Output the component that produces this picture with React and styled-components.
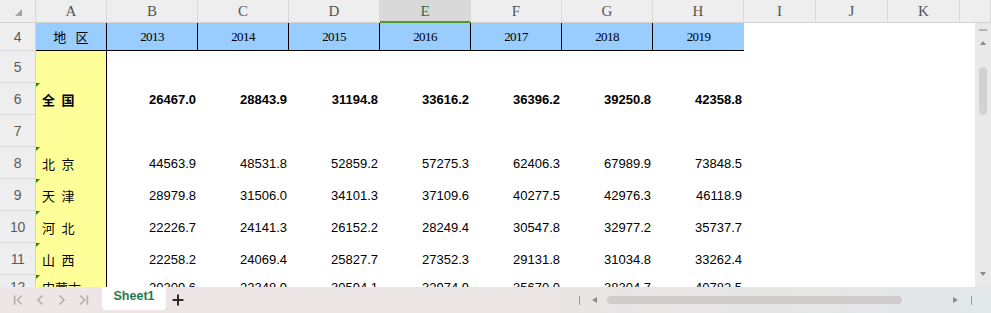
import React from 'react'
import styled, { createGlobalStyle } from 'styled-components'
import { ChevronFirst, ChevronLeft, ChevronRight, ChevronLast, Plus } from 'lucide-react'

const GlobalStyle = createGlobalStyle`
  html, body {
    margin: 0;
    padding: 0;
    background: #fff;
  }
  body {
    font-family: "Liberation Sans", Arial, sans-serif;
    overflow: hidden;
  }
`

const COLS = '36px 71px repeat(7, 91px) 72px 72px 72px 1fr'

const letters = ['A', 'B', 'C', 'D', 'E', 'F', 'G', 'H', 'I', 'J', 'K']
const years = ['2013', '2014', '2015', '2016', '2017', '2018', '2019']

const rows = [
    { n: 5 },
    { n: 6, name: '全 国', bold: true, flag: true, values: ['26467.0', '28843.9', '31194.8', '33616.2', '36396.2', '39250.8', '42358.8'] },
    { n: 7 },
    { n: 8, name: '北 京', flag: true, values: ['44563.9', '48531.8', '52859.2', '57275.3', '62406.3', '67989.9', '73848.5'] },
    { n: 9, name: '天 津', flag: true, values: ['28979.8', '31506.0', '34101.3', '37109.6', '40277.5', '42976.3', '46118.9'] },
    { n: 10, name: '河 北', flag: true, values: ['22226.7', '24141.3', '26152.2', '28249.4', '30547.8', '32977.2', '35737.7'] },
    { n: 11, name: '山 西', flag: true, values: ['22258.2', '24069.4', '25827.7', '27352.3', '29131.8', '31034.8', '33262.4'] },
    { n: 12, name: '内蒙古', flag: true, values: ['20209.6', '22348.9', '30594.1', '32974.9', '35670.0', '38304.7', '40782.5'] },
]

const App = () => {
    return (
        <Window>
            <GlobalStyle />
            <ColHeader>
                <Corner><CornerMark /></Corner>
                {letters.map(l => (
                    <ColHead key={l} $active={l === 'E'}>{l}</ColHead>
                ))}
                <ColHead />
            </ColHeader>
            <Body>
                <Grid>
                    <RowHead>4</RowHead>
                    <TitleCell $spaced>地 区</TitleCell>
                    {years.map((y, i) => (
                        <TitleCell key={y} $last={i === years.length - 1}>{y}</TitleCell>
                    ))}
                    <Blank /><Blank /><Blank /><Blank />

                    {rows.map(r => (
                        <React.Fragment key={r.n}>
                            <RowHead>{r.n}</RowHead>
                            <NameCell $bold={r.bold} $flag={r.flag}>{r.name}</NameCell>
                            {(r.values || Array(7).fill('')).map((v, i) => (
                                <NumCell key={i} $bold={r.bold}>{v}</NumCell>
                            ))}
                            <Blank /><Blank /><Blank /><Blank />
                        </React.Fragment>
                    ))}
                </Grid>
                <VScroll>
                    <Dash />
                    <ArrowUp />
                    <VThumb />
                    <Spacer />
                    <ArrowDown />
                </VScroll>
            </Body>
            <BottomBar>
                <NavGroup>
                    <ChevronFirst size={16} strokeWidth={2.6} />
                    <ChevronLeft size={16} strokeWidth={2.6} />
                    <ChevronRight size={16} strokeWidth={2.6} />
                    <ChevronLast size={16} strokeWidth={2.6} />
                </NavGroup>
                <SheetTab>Sheet1</SheetTab>
                <AddSheet><Plus size={16} strokeWidth={3} /></AddSheet>
                <HScroll>
                    <Tick />
                    <ArrowLeft />
                    <HThumb />
                    <Spacer />
                    <ArrowRight />
                    <Tick $end />
                </HScroll>
            </BottomBar>
        </Window>
    )
}

const Window = styled.div`
    width: 991px;
    height: 313px;
    display: flex;
    flex-direction: column;
    overflow: hidden;
    background: #fff;
`
const ColHeader = styled.div`
    display: grid;
    grid-template-columns: ${COLS};
    height: 23px;
    flex-shrink: 0;
`
const Corner = styled.div`
    background: #eeeeee;
    border-right: 1px solid #d6d6d6;
    border-bottom: 1px solid #d2d2d2;
    display: flex;
    align-items: center;
    justify-content: center;
    padding: 3px 0 0 1px;
    box-sizing: border-box;
`
const CornerMark = styled.div`
    width: 0;
    height: 0;
    border-bottom: 7px solid #a5a5a5;
    border-left: 7px solid transparent;
`
const ColHead = styled.div`
    box-sizing: border-box;
    background: ${p => (p.$active ? '#d9d9d9' : '#eeeeee')};
    border-right: 1px solid #d9d9d9;
    border-bottom: ${p => (p.$active ? '2px solid #4c9a2a' : '1px solid #d2d2d2')};
    color: ${p => (p.$active ? '#217346' : '#555')};
    font-family: "Liberation Serif", "DejaVu Serif", serif;
    font-size: 15px;
    display: flex;
    align-items: center;
    justify-content: center;
    padding-top: ${p => (p.$active ? '1px' : '0')};
`
const Body = styled.div`
    display: flex;
    height: 264px;
    flex-shrink: 0;
    overflow: hidden;
`
const Grid = styled.div`
    flex: 1;
    display: grid;
    grid-template-columns: ${COLS};
    grid-template-rows: 28px repeat(7, 32px) 24px;
    align-content: start;
    overflow: hidden;
`
const RowHead = styled.div`
    box-sizing: border-box;
    background: #eeeeee;
    border-right: 1px solid #d2d2d2;
    border-bottom: 1px solid #dadada;
    color: #5a5a5a;
    font-family: "Liberation Sans", Arial, sans-serif;
    font-size: 14px;
    letter-spacing: -0.4px;
    display: flex;
    align-items: center;
    justify-content: center;
`
const TitleCell = styled.div`
    box-sizing: border-box;
    background: #99ccff;
    border-right: ${p => (p.$last ? 'none' : '1px solid #000')};
    border-bottom: 1px solid #000;
    color: #000;
    font-family: "Liberation Serif", "Noto Sans CJK SC", serif;
    font-size: 13px;
    letter-spacing: ${p => (p.$spaced ? '0' : '-0.6px')};
    word-spacing: ${p => (p.$spaced ? '6px' : '0')};
    white-space: pre;
    display: flex;
    align-items: center;
    justify-content: center;
`
const NameCell = styled.div`
    position: relative;
    box-sizing: border-box;
    background: #ffff99;
    border-right: 1px solid #000;
    color: #000;
    font-family: "Liberation Sans", "Noto Sans CJK SC", sans-serif;
    font-size: 13px;
    font-weight: ${p => (p.$bold ? 700 : 400)};
    word-spacing: 3px;
    display: flex;
    align-items: center;
    padding-left: 6px;
    white-space: pre;
    &::before {
        content: '';
        display: ${p => (p.$flag ? 'block' : 'none')};
        position: absolute;
        top: 0;
        left: 0;
        border-top: 4px solid #1f7f1f;
        border-right: 4px solid transparent;
    }
`
const NumCell = styled.div`
    box-sizing: border-box;
    color: #000;
    font-family: "Liberation Sans", Arial, sans-serif;
    font-size: 13px;
    font-weight: ${p => (p.$bold ? 700 : 400)};
    display: flex;
    align-items: center;
    justify-content: flex-end;
    padding-right: 2px;
`
const Blank = styled.div`
    background: #fff;
`
const VScroll = styled.div`
    width: 16px;
    flex-shrink: 0;
    background: #e9e9e9;
    display: flex;
    flex-direction: column;
    align-items: center;
    padding: 6px 0 11px;
    box-sizing: border-box;
`
const Dash = styled.div`
    width: 8px;
    height: 2px;
    background: #b3b3b3;
`
const ArrowUp = styled.div`
    margin-top: 10px;
    width: 0;
    height: 0;
    border-left: 3px solid transparent;
    border-right: 3px solid transparent;
    border-bottom: 4px solid #8a8a8a;
`
const ArrowDown = styled.div`
    width: 0;
    height: 0;
    border-left: 3px solid transparent;
    border-right: 3px solid transparent;
    border-top: 4px solid #8a8a8a;
`
const VThumb = styled.div`
    margin-top: 22px;
    width: 8px;
    height: 48px;
    border-radius: 4px;
    background: #d2d2d2;
`
const Spacer = styled.div`
    flex: 1;
`
const BottomBar = styled.div`
    height: 26px;
    flex-shrink: 0;
    display: flex;
    align-items: flex-start;
    background: linear-gradient(90deg, #eee6e6 0%, #ece5e5 50%, #e3e8e9 100%);
`
const NavGroup = styled.div`
    height: 26px;
    display: flex;
    align-items: center;
    gap: 6px;
    padding-left: 10px;
    color: #b2b2b2;
`
const SheetTab = styled.div`
    margin-left: 10px;
    width: 64px;
    height: 23px;
    background: #fff;
    border-radius: 0 0 4px 4px;
    color: #1e7a50;
    font-family: "Liberation Sans", Arial, sans-serif;
    font-size: 12.5px;
    font-weight: 700;
    display: flex;
    justify-content: center;
    padding-top: 2px;
    box-sizing: border-box;
`
const AddSheet = styled.div`
    margin-left: 4px;
    width: 16px;
    height: 26px;
    display: flex;
    align-items: center;
    color: #2b2b2b;
`
const HScroll = styled.div`
    margin-left: auto;
    width: 416px;
    height: 26px;
    display: flex;
    align-items: center;
    padding: 0 19px 0 4px;
    box-sizing: border-box;
`
const Tick = styled.div`
    width: 1px;
    height: 9px;
    background: #9a9a9a;
    margin-left: ${p => (p.$end ? '13px' : '0')};
`
const ArrowLeft = styled.div`
    margin-left: 12px;
    width: 0;
    height: 0;
    border-top: 3px solid transparent;
    border-bottom: 3px solid transparent;
    border-right: 5px solid #8c8c8c;
`
const ArrowRight = styled.div`
    width: 0;
    height: 0;
    border-top: 3px solid transparent;
    border-bottom: 3px solid transparent;
    border-left: 5px solid #8c8c8c;
`
const HThumb = styled.div`
    margin-left: 10px;
    width: 295px;
    height: 8px;
    border-radius: 4px;
    background: #d0cccb;
`

export default App
